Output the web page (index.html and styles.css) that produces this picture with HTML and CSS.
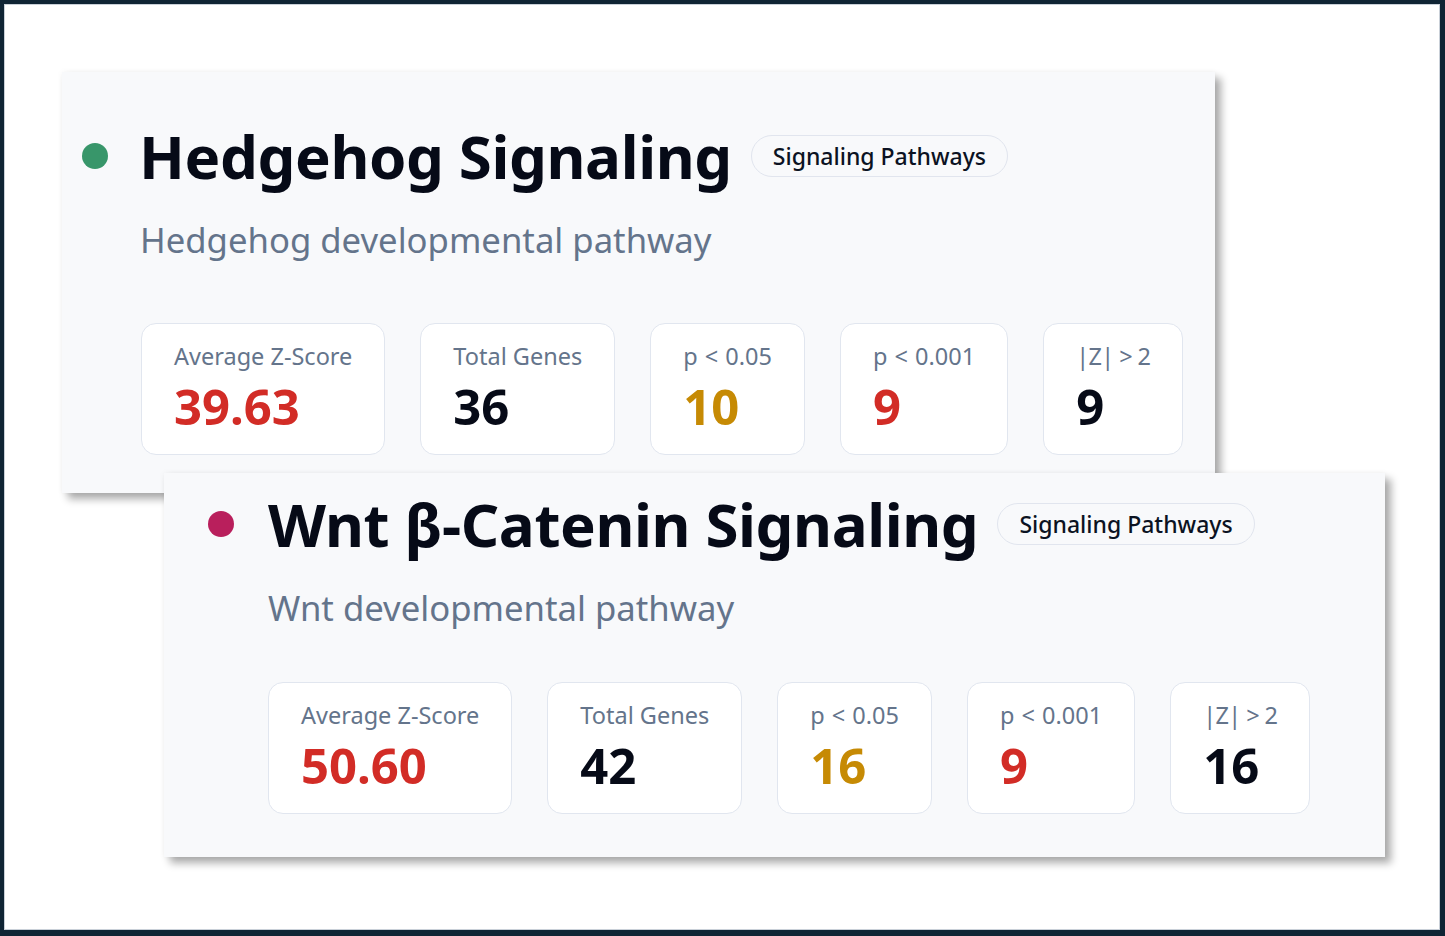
FILE: index.html
```html
<!DOCTYPE html>
<html lang="en">
<head>
<meta charset="utf-8">
<title>Pathway cards</title>
<link rel="stylesheet" href="styles.css">
</head>
<body>
<div class="frame">
  <section class="card card-hedgehog">
    <div class="card-head">
      <span class="dot dot-green"></span>
      <h2 class="title">Hedgehog Signaling</h2>
      <span class="badge">Signaling Pathways</span>
    </div>
    <p class="subtitle">Hedgehog developmental pathway</p>
    <div class="stats">
      <div class="stat"><div class="label">Average Z-Score</div><div class="value red">39.63</div></div>
      <div class="stat"><div class="label">Total Genes</div><div class="value">36</div></div>
      <div class="stat"><div class="label label-p">p &lt; 0.05</div><div class="value gold">10</div></div>
      <div class="stat"><div class="label label-p">p &lt; 0.001</div><div class="value red">9</div></div>
      <div class="stat"><div class="label label-z">|Z| &gt; 2</div><div class="value">9</div></div>
    </div>
  </section>
  <section class="card card-wnt">
    <div class="card-head">
      <span class="dot dot-pink"></span>
      <h2 class="title">Wnt β-Catenin Signaling</h2>
      <span class="badge">Signaling Pathways</span>
    </div>
    <p class="subtitle">Wnt developmental pathway</p>
    <div class="stats">
      <div class="stat"><div class="label">Average Z-Score</div><div class="value red">50.60</div></div>
      <div class="stat"><div class="label">Total Genes</div><div class="value">42</div></div>
      <div class="stat"><div class="label label-p">p &lt; 0.05</div><div class="value gold">16</div></div>
      <div class="stat"><div class="label label-p">p &lt; 0.001</div><div class="value red">9</div></div>
      <div class="stat"><div class="label label-z">|Z| &gt; 2</div><div class="value">16</div></div>
    </div>
  </section>
</div>
</body>
</html>
```
FILE: styles.css
```css
* { box-sizing: border-box; }
html, body { margin: 0; padding: 0; }
body {
  width: 1445px;
  height: 936px;
  background: #0f2434;
  font-family: "Noto Sans", "Open Sans", sans-serif;
  overflow: hidden;
}
.frame {
  position: relative;
  width: 1445px;
  height: 936px;
  background: #ffffff;
  border-style: solid;
  border-color: #0f2434;
  border-width: 4px 5px 6px 4px;
  box-shadow: inset 0 0 0 1px #c9d0d8;
}
.card {
  position: absolute;
  background: #f8f9fb;
  box-shadow: 6px 6px 8px rgba(0, 0, 0, 0.33), 0 0 6px rgba(0, 0, 0, 0.05);
  display: flex;
  flex-direction: column;
  align-items: flex-start;
}
.card-hedgehog {
  left: 58px;
  top: 68px;
  width: 1153px;
  height: 421px;
  padding: 48px 35px 38px 20px;
}
.card-wnt {
  left: 160px;
  top: 469px;
  width: 1221px;
  height: 384px;
  padding: 15px 78px 43px 44px;
}
.card-head {
  display: flex;
  align-items: center;
  height: 72px;
}
.dot {
  width: 26px;
  height: 26px;
  border-radius: 50%;
  flex: none;
  margin-right: 31px;
}
.card-wnt .dot { margin-right: 34px; }
.dot-green { background: #38966a; }
.dot-pink { background: #b91f5c; }
.title {
  margin: 0;
  font-size: 60px;
  line-height: 72px;
  font-weight: 700;
  color: #060a17;
  letter-spacing: -0.4px;
  white-space: nowrap;
}
.badge {
  margin-left: 19px;
  height: 42px;
  padding: 0 21px;
  border: 1px solid #e1e5ee;
  border-radius: 21px;
  display: flex;
  align-items: center;
  font-size: 23px;
  font-weight: 500;
  color: #0b1222;
  white-space: nowrap;
}
.subtitle {
  margin: 26px 0 0 58px;
  font-size: 34.7px;
  line-height: 44px;
  color: #64748b;
}
.card-wnt .subtitle { margin-left: 60px; }
.stats {
  display: flex;
  gap: 35px;
  margin: 61px 0 0 59px;
}
.card-wnt .stats { margin-top: 52px; margin-left: 60px; }
.stat {
  background: #ffffff;
  border: 1px solid #e1e6ef;
  border-radius: 15px;
  padding: 17px 32px 18px;
}
.label {
  font-size: 23.5px;
  line-height: 30px;
  color: #64748b;
  white-space: nowrap;
}
.label-p { word-spacing: 1px; }
.label-z { letter-spacing: -0.6px; }
.value {
  margin-top: 5px;
  font-size: 49px;
  line-height: 60px;
  font-weight: 700;
  color: #060a17;
}
.red { color: #d22c26; }
.gold { color: #c68a04; }
```
